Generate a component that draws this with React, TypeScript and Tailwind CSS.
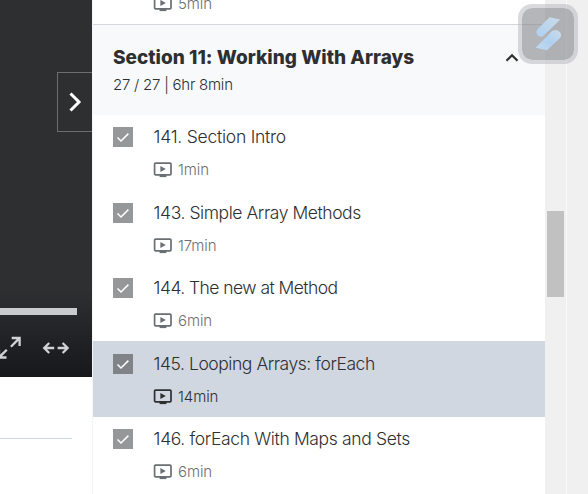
type Lecture = { title: string; duration: string; tracking: string; height: string; active?: boolean };

const lectures: Lecture[] = [
  { title: '141. Section Intro', duration: '1min', tracking: 'tracking-[-0.24px]', height: 'h-[76px]' },
  { title: '143. Simple Array Methods', duration: '17min', tracking: 'tracking-[-0.43px]', height: 'h-[75px]' },
  { title: '144. The new at Method', duration: '6min', tracking: 'tracking-[-0.55px]', height: 'h-[75px]' },
  { title: '145. Looping Arrays: forEach', duration: '14min', tracking: 'tracking-[-0.45px]', height: 'h-[76px]', active: true },
  { title: '146. forEach With Maps and Sets', duration: '6min', tracking: 'tracking-[-0.35px]', height: 'h-[77px]' },
];

function VideoIcon() {
  return (
    <svg width="19" height="16" viewBox="0 0 19 16" className="shrink-0">
      <rect x="1.6" y="1.1" width="16.4" height="11.7" rx="1" fill="none" stroke="currentColor" strokeWidth="1.7" />
      <path d="M7.4 3.9v6.2l5.4-3.1z" fill="currentColor" />
      <path d="M6.6 13h6.8v2.1H6.6z" fill="currentColor" />
    </svg>
  );
}

function Duration({ text }: { text: string }) {
  return (
    <div className="flex h-5 items-center gap-1.5">
      <VideoIcon />
      <span className="text-[15px] leading-5 font-light tracking-[-0.1px]">{text}</span>
    </div>
  );
}

function LectureRow({ lecture }: { lecture: Lecture }) {
  return (
    <li className={`flex pl-5 ${lecture.height} ${lecture.active ? 'bg-[#d1d7e0] pt-[13px]' : 'bg-white pt-3'}`}>
      <span className={`flex size-5 shrink-0 items-center justify-center text-white ${lecture.active ? 'bg-[#808388]' : 'bg-[#969798]'}`}>
        <svg width="14" height="12" viewBox="0 0 14 12" fill="none" stroke="currentColor" strokeWidth="1.5">
          <path d="M1.5 6.5 5 10l7.4-7.4" />
        </svg>
      </span>
      <div className={`ml-5 ${lecture.active ? 'text-[#2d2f31]' : 'text-[#6a6f73]'}`}>
        <p className={`pl-[0.6px] text-[17.5px] leading-5 font-light whitespace-nowrap text-[#2d2f31] ${lecture.tracking}`}>{lecture.title}</p>
        <div className="mt-[13px]">
          <Duration text={lecture.duration} />
        </div>
      </div>
    </li>
  );
}

function Player() {
  return (
    <aside className="flex w-[92px] shrink-0 flex-col">
      <div className="flex h-[377px] flex-col bg-[linear-gradient(to_bottom,#2d2f31_0,#2d2f31_290px,#16181b_377px)]">
        <div className="mt-[72px] flex h-[60px] w-[35px] items-center self-end border border-r-0 border-[#6c6e70] pl-[11px] text-white">
          <svg width="14" height="20" viewBox="0 0 14 20" fill="none" stroke="currentColor" strokeWidth="3">
            <path d="m1.5 1.5 8.5 8.5-8.5 8.5" />
          </svg>
        </div>
        <div className="mt-44 h-[7px] w-[77px] bg-[#c9cbcd]" />
        <div className="mt-[19px] flex h-7 items-center text-[#d1d2d8]">
          <svg width="22" height="24" viewBox="0 0 22 24" fill="none" stroke="currentColor" strokeWidth="2.3">
            <path d="M11.7 2h7.9v7.9M19.2 2.4l-8.3 8.3M-1 14v7.5h7.5M-1.5 22l8.3-8.3" />
          </svg>
          <svg width="27" height="14" viewBox="0 0 27 14" fill="none" stroke="currentColor" strokeWidth="2.3" className="ml-[20px]">
            <path d="M7.2 2 2.2 7l5 5M2.2 7H12.2M20.6 2l5 5-5 5M25.6 7h-10" />
          </svg>
        </div>
      </div>
      <div className="mt-[61px] h-px w-[72px] bg-[#d1d7e0]" />
    </aside>
  );
}

function FloatingLogo() {
  return (
    <div className="absolute top-1 left-[518px] size-[60px] rounded-[14px] border-4 border-[#b5b6bd]/50 bg-[#83858c]/60 bg-clip-padding">
      <svg width="52" height="52" viewBox="0 0 52 52">
        <defs>
          <linearGradient id="logo-top" x1="0" y1="1" x2="1" y2="0">
            <stop offset="0" stopColor="#aed1f2" />
            <stop offset="1" stopColor="#cadbe8" />
          </linearGradient>
          <linearGradient id="logo-bottom" x1="0" y1="1" x2="1" y2="0">
            <stop offset="0" stopColor="#c3daee" />
            <stop offset=".5" stopColor="#b0d0f0" />
            <stop offset="1" stopColor="#cbddea" />
          </linearGradient>
        </defs>
        <path d="M27.5 9.2 38.3 11.6 21.5 27.8C18 30.5 14 27 14.5 23.5Q14.8 22 16.5 20.2Z" fill="url(#logo-top)" />
        <path d="M13.6 39.7 29.5 23.5C32 21 40 22.5 39 28Q38.5 29.5 37 31L25 42.3Z" fill="url(#logo-bottom)" />
      </svg>
    </div>
  );
}

export default function App() {
  return (
    <div className="relative flex h-[494px] w-[588px] overflow-hidden bg-white font-['Inter','Liberation_Sans',sans-serif]">
      <Player />
      <main className="w-[453px] shrink-0 border-l border-[#f4f5f7]">
        <div className="h-6 overflow-hidden pl-[60px] text-[#6a6f73]">
          <div className="-mt-[6px]">
            <Duration text="5min" />
          </div>
        </div>
        <header className="flex h-[91px] justify-between border-t border-[#d1d7dc] bg-[#f7f9fb] pl-5 pr-[26px] pt-[21px] text-[#2d2f31]">
          <div>
            <h2 className="text-[19px] leading-6 font-extrabold tracking-[0.02px] whitespace-nowrap">Section 11: Working With Arrays</h2>
            <p className="mt-[5px] text-[15px] leading-5 font-light tracking-[-0.24px]">27 / 27 | 6hr 8min</p>
          </div>
          <svg width="14" height="10" viewBox="0 0 14 10" fill="none" stroke="currentColor" strokeWidth="2.2" className="mt-[7px]">
            <path d="m1.5 7.8 5.5-5.5 5.5 5.5" />
          </svg>
        </header>
        <ul>
          {lectures.map((lecture) => (
            <LectureRow key={lecture.title} lecture={lecture} />
          ))}
        </ul>
      </main>
      <div className="w-[21px] shrink-0 bg-[#f0f0f0] pl-0.5 pt-[211px]">
        <div className="h-[86px] w-[17px] bg-[#c1c1c1]" />
      </div>
      <div className="w-[22px] shrink-0 border-l border-[#f9f9f9] bg-[#f0f0f0]" />
      <FloatingLogo />
    </div>
  );
}
